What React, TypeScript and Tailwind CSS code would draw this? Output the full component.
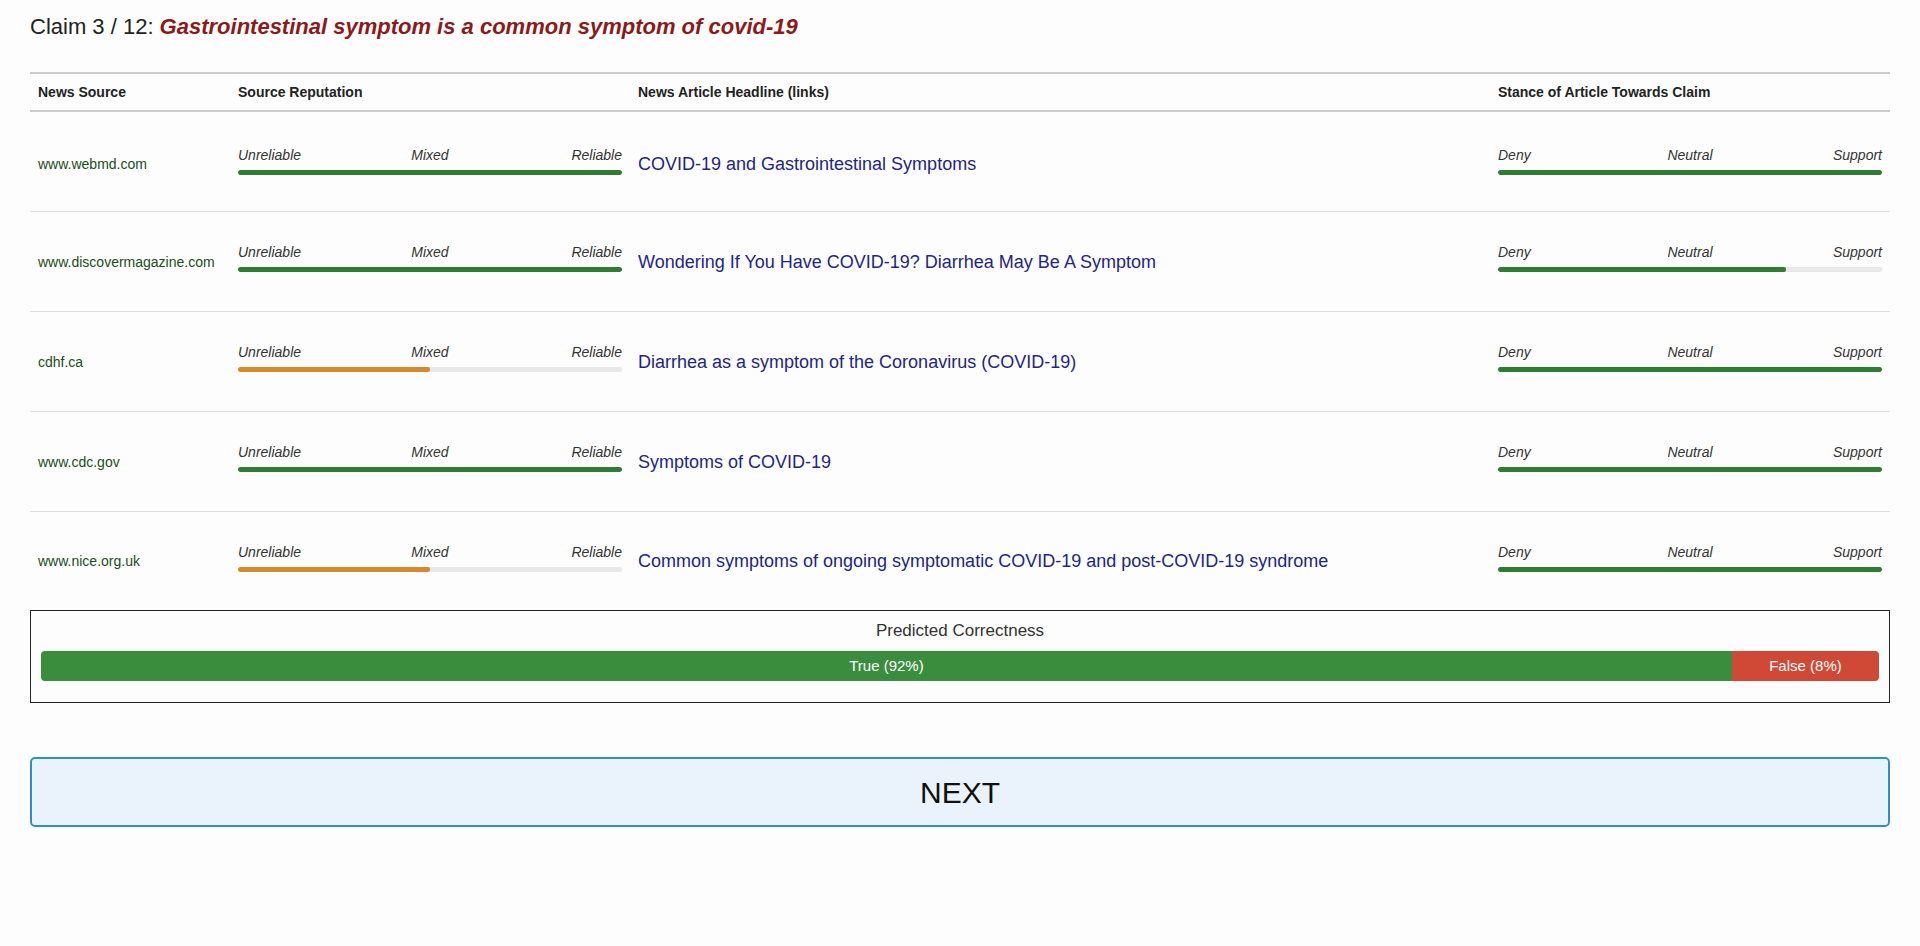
import React from "react";

type Row = {
  source: string;
  rep: number;
  repColor: string;
  headline: string;
  stance: number;
};

const rows: Row[] = [
  { source: "www.webmd.com", rep: 100, repColor: "bg-[#2e7d32]", headline: "COVID-19 and Gastrointestinal Symptoms", stance: 100 },
  { source: "www.discovermagazine.com", rep: 100, repColor: "bg-[#2e7d32]", headline: "Wondering If You Have COVID-19? Diarrhea May Be A Symptom", stance: 75 },
  { source: "cdhf.ca", rep: 50, repColor: "bg-[#d4892c]", headline: "Diarrhea as a symptom of the Coronavirus (COVID-19)", stance: 100 },
  { source: "www.cdc.gov", rep: 100, repColor: "bg-[#2e7d32]", headline: "Symptoms of COVID-19", stance: 100 },
  { source: "www.nice.org.uk", rep: 50, repColor: "bg-[#d4892c]", headline: "Common symptoms of ongoing symptomatic COVID-19 and post-COVID-19 syndrome", stance: 100 },
];

function Scale({ labels, value, color }: { labels: [string, string, string]; value: number; color: string }) {
  return (
    <div className="w-full pb-[8px]">
      <div className="grid grid-cols-3 text-[14px] leading-[16px] italic text-[#333]">
        <span className="text-left">{labels[0]}</span>
        <span className="text-center">{labels[1]}</span>
        <span className="text-right">{labels[2]}</span>
      </div>
      <div className="mt-[7px] h-[5px] w-full rounded-[2px] bg-[#e8e8e8] overflow-hidden">
        <div className={`h-full ${color} rounded-[2px]`} style={{ width: `${value}%` }} />
      </div>
    </div>
  );
}

export default function App() {
  return (
    <div
      className="min-h-screen bg-[#fdfdfd] px-[30px] pt-[13px] text-[#222]"
      style={{ fontFamily: '"Liberation Sans", Arial, sans-serif' }}
    >
      <h1 className="text-[22px] leading-[28px] font-normal text-[#222]">
        Claim 3 / 12: <span className="font-bold italic text-[#8b1a1a]">Gastrointestinal symptom is a common symptom of covid-19</span>
      </h1>

      <div className="mt-[31px]">
        <div className="grid grid-cols-[200px_400px_1fr_400px] h-[40px] items-center border-y-2 border-[#cccccc] text-[14px] font-bold text-[#222]">
          <div className="px-2">News Source</div>
          <div className="px-2">Source Reputation</div>
          <div className="px-2">News Article Headline (links)</div>
          <div className="px-2">Stance of Article Towards Claim</div>
        </div>
        {rows.map((r, i) => (
          <div
            key={i}
            className={`grid grid-cols-[200px_400px_1fr_400px] items-center ${i === 0 ? "pt-[6px]" : "pt-[1px]"} ${i < rows.length - 1 ? "h-[100px] border-b border-[#dddddd]" : "h-[98px]"}`}
          >
            <div className="px-2 text-[14px] text-[#1a4d1a]">{r.source}</div>
            <div className="px-2">
              <Scale labels={["Unreliable", "Mixed", "Reliable"]} value={r.rep} color={r.repColor} />
            </div>
            <div className="px-2 text-[18px] text-[#1f2585]">
              <a href="#" className="text-[#1f2585]">{r.headline}</a>
            </div>
            <div className="px-2">
              <Scale labels={["Deny", "Neutral", "Support"]} value={r.stance} color="bg-[#2e7d32]" />
            </div>
          </div>
        ))}
      </div>

      <div className="border border-[#222] px-[10px] pt-[10px] pb-[21px]">
        <div className="text-center text-[17px] leading-[20px] text-[#333]">Predicted Correctness</div>
        <div className="mt-[10px] flex h-[30px] w-full overflow-hidden rounded-[4px] text-[15px] text-white">
          <div className="flex items-center justify-center bg-[#3a8d3d]" style={{ width: "92%" }}>True (92%)</div>
          <div className="flex items-center justify-center bg-[#cf4936]" style={{ width: "8%" }}>False (8%)</div>
        </div>
      </div>

      <button className="mt-[54px] flex h-[70px] w-full items-center justify-center rounded-[5px] border-2 border-[#2b93c4] bg-[#eaf3fb] text-[30px] text-[#111]">
        NEXT
      </button>
    </div>
  );
}
